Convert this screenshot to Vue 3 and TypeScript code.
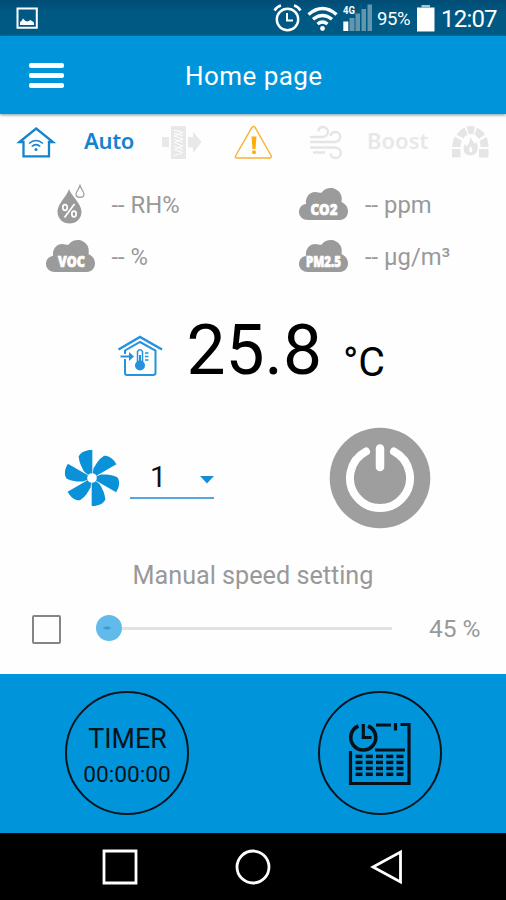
<script setup lang="ts">
import { ref } from 'vue'

const temperature = ref('25.8')
const fanSpeed = ref(1)
const manualSpeed = ref(45)
const timer = ref('00:00:00')
const blades = [0, 60, 120, 180, 240, 300]
const calendarRows = [756.4, 762.4, 768.4, 774.3]
const calendarColumns = [355.5, 365.8, 376, 386.3, 396.5]
const cloud = 'M9 32C4 32 0 28.500 0 24C0 19.500 3 16.500 7 16C6 8 12 2 19.500 4.500C22 5 22.500 5 24 3C27 0 33-1 37 1.500C42 4 43.500 9 42.500 14C46.500 16 49 19 49 23.500C49 28 45.500 32 41 32Z'
</script>

<template>
  <div class="screen">
    <header class="status">
      <svg class="picture" viewBox="15 6 24 24" width="24" height="24">
        <path d="M17.500 8.500H36.800V27.800H17.500Z" fill="none" stroke="#fff" stroke-width="2" />
        <path d="M20 25V22L21.500 21L23 18.500L25.500 21L27.500 21.500L30.500 20L34 22.500V25Z" fill="#fff" />
      </svg>
      <svg class="alarm" viewBox="273 2 30 32" width="30" height="32" fill="none" stroke="#fff">
        <circle cx="287.500" cy="19.500" r="10.700" stroke-width="2.400" />
        <path d="M287 13V20.500H293" stroke-width="2" />
        <path d="M274.500 10.500Q277 6.500 281 5.500M294 5.500Q298 6.500 300.500 10.500" stroke-width="2.600" />
      </svg>
      <svg class="wifi" viewBox="307 4 32 30" width="32" height="30" fill="none" stroke="#fff" stroke-width="3.400">
        <path d="M308.500 14.500Q322.500 2.500 336.500 14.500M313 19.300Q322.500 11.500 332 19.300M317.500 24Q322.500 20 327.500 24" />
        <circle cx="322.500" cy="28.500" r="2.400" fill="#fff" stroke="none" />
      </svg>
      <svg class="signal" viewBox="342 4 31 28" width="31" height="28">
        <path d="M349.500 18H354.500V31H349.500ZM355.500 13.500H360V31H355.500ZM361.500 9H366V31H361.500ZM367.500 4.500H372V31H367.500Z" fill="#6296ad" />
        <path d="M343.300 21.500H348.300V31H343.300Z" fill="#fff" />
        <text x="343" y="13.500" textLength="12" lengthAdjust="spacingAndGlyphs">4G</text>
      </svg>
      <span class="percent">95%</span>
      <svg class="battery" viewBox="417 4 18 28" width="18" height="28">
        <path d="M417 7.500H434.500V31.500H417Z" fill="#fff" />
        <path d="M421.500 5H430V7.500H421.500Z" fill="#a9c5d2" />
      </svg>
      <span class="clock">12:07</span>
    </header>

    <nav class="appbar">
      <button class="menu" aria-label="Menu"><i /><i /><i /></button>
      <h1>Home page</h1>
    </nav>

    <main>
      <section class="modes">
        <svg viewBox="18 126 36 33" width="36" height="33" fill="none" stroke="#1584ce">
          <path d="M19.500 142L36.200 128.500L53 142H49V156.300H23.500V142Z" stroke-width="2.300" />
          <path d="M29 143.500Q36 137.500 43 143.500M31.700 146.500Q36 142.800 40.300 146.500" stroke-width="1.500" />
          <circle cx="36" cy="149.500" r="1.500" fill="#1584ce" stroke="none" />
        </svg>
        <span class="auto">Auto</span>
        <svg viewBox="161 124 41 36" width="41" height="36" fill="#e8e8e8">
          <path d="M162 137H169V147H162ZM171 126H186V159H171ZM188 137H193V131.500L201.500 142L193 153V147.500H188Z" />
          <path d="M174 130L183 132.500L174 136L183 139L174 142.500L183 146L174 149.500L183 152.500L174 156M174 133L183 136M174 139L183 142.500M174 146L183 149.500" fill="none" stroke="#fff" stroke-width="1" />
        </svg>
        <svg viewBox="234 124 39 36" width="39" height="36">
          <path d="M253.500 126.500Q254.500 126.500 255.200 127.700L271 155.500Q272 158 269.500 158H237Q234.500 158 235.800 155.500L251.800 127.700Q252.500 126.500 253.500 126.500Z" fill="none" stroke="#fbb034" stroke-width="1.400" />
          <path d="M251.500 136.500H256.500L255.500 149H252.500Z" fill="#ffad0d" />
          <circle cx="254" cy="152.300" r="2" fill="#ffad0d" />
        </svg>
        <svg viewBox="309 124 34 36" width="34" height="36" fill="none" stroke="#e5e5e5" stroke-width="2.300">
          <path d="M310 137H322.500C330 136.500 329.500 127 323 127C320 127 318.500 129 318.500 131.500M310 142H334.500C342.500 141 341.500 132 335.500 132C332.500 132 331 133.500 330.500 136M310 147.500H335C342.500 148 342.500 158 335.500 158C332.500 158 331 156 330.500 153.500M313 152.500H325" />
        </svg>
        <span class="boost">Boost</span>
        <svg viewBox="451 125 40 35" width="40" height="35" fill="#e5e5e5">
          <path d="M452 150H460.500V158.500H452ZM479 150H488.500V158.500H479ZM452 148Q452.500 142 455 137.500L462 142Q460.500 145 460.500 148ZM456.500 135.500Q460 130.500 464.500 128.500L467.500 135.500Q465 137 463.500 139.500ZM466.500 127.500Q470.500 126.500 475 127.500L473.500 135Q470.500 134.300 468.500 135ZM477 128.500Q482 131 485 135.500L478.500 140Q477 137 474.500 135.500ZM486.500 138Q488.500 142 488.500 148H480.500Q480.500 145 479.500 142Z" />
          <path d="M470.500 138Q471.500 141 475 145Q477 143 476 141.500Q481 155 471 156.500Q461 156 464.500 145Q465.500 147 467.500 147Q470 143 470.500 138Z" />
          <path d="M470.500 147Q474 151 471 153.500Q467.500 152.500 470.500 147Z" fill="#fff" />
        </svg>
      </section>

      <section class="sensors">
        <div class="sensor">
          <svg class="drops" viewBox="45 182 49 42" width="49" height="42">
            <path d="M68 188C66 195 56.500 203 56.500 210.500C56.500 218 62 222.500 68.500 222.500C75 222.500 80.500 218 80.500 210.500C80.500 203 70.500 195 68 188Z" fill="#9b9b9b" />
            <path d="M79 184.500C78 188 75 191 75 193Q75 196.300 79 196.300Q83 196.300 83 193C83 191 80 188 79 184.500Z" fill="none" stroke="#9b9b9b" stroke-width="1.200" />
            <g fill="none" stroke="#fff" stroke-width="1.700">
              <ellipse cx="64" cy="206.500" rx="2.200" ry="2.800" /><ellipse cx="73" cy="213" rx="2.200" ry="2.800" /><path d="M73.500 203L63.500 216.500" />
            </g>
          </svg>
          <span>-- RH%</span>
        </div>
        <div class="sensor">
          <svg viewBox="0 0 49 33" width="49" height="33"><path :d="cloud" fill="#9b9b9b" /><text x="11.500" y="27" textLength="27" lengthAdjust="spacingAndGlyphs">CO2</text></svg>
          <span>-- ppm</span>
        </div>
        <div class="sensor">
          <svg viewBox="0 0 49 33" width="49" height="33"><path :d="cloud" fill="#9b9b9b" /><text x="12" y="27" textLength="27" lengthAdjust="spacingAndGlyphs">VOC</text></svg>
          <span>-- %</span>
        </div>
        <div class="sensor">
          <svg viewBox="0 0 49 33" width="49" height="33"><path :d="cloud" fill="#9b9b9b" /><text x="7" y="27" textLength="35" lengthAdjust="spacingAndGlyphs">PM2.5</text></svg>
          <span class="micro">-- µg/m³</span>
        </div>
      </section>

      <section class="temperature">
        <svg viewBox="117 335 46 42" width="46" height="42" fill="none" stroke="#2492dc">
          <path d="M118.500 349.500L140 337L162 349.500" stroke-width="2.400" />
          <path d="M125 354V350.500L140 342L155.500 350.500V373Q155.500 375 153 375H127Q125 375 125 373V359" stroke-width="2" />
          <path d="M120.500 356.500H130" stroke-width="2" />
          <path d="M129 352L134 356.500L129 361Z" fill="#2492dc" stroke="none" />
          <path d="M137.500 362V351.500Q140 348 142.500 351.500V362" stroke-width="1.500" />
          <path d="M140 355V365" stroke-width="2" /><circle cx="140" cy="365.500" r="5" fill="#2492dc" stroke="none" />
          <path d="M145 353H148.500M145 356.500H148.500M145 360H148.500" stroke-width="1.300" />
        </svg>
        <strong>{{ temperature }}</strong>
        <span>°C</span>
      </section>

      <section class="controls">
        <svg class="fan" viewBox="-28 -30 56 60" width="56" height="60">
          <path v-for="angle in blades" :key="angle" :transform="`rotate(${angle})`" d="M.3-28C-6-28.200-11.500-26-13.300-21.500C-12.700-15-10.500-11-7.500-6L0 0H.3Z" fill="#0a91d8" />
          <circle r="4.800" fill="#fff" />
        </svg>
        <div class="select">
          <span>{{ fanSpeed }}</span>
          <svg viewBox="0 0 14 8" width="14" height="8"><path d="M0 0H14L7 7.500Z" fill="#168ed5" /></svg>
        </div>
        <button class="power" aria-label="Power">
          <svg viewBox="-51 -51 102 102" width="102" height="102" fill="none" stroke="#fff" stroke-linecap="round">
            <circle r="50.300" fill="#9e9e9e" stroke="none" />
            <path d="M0-29.500V-11" stroke-width="8.500" />
            <path d="M-14-26.500A30 30 0 1 0 14-26.500" stroke-width="8" />
          </svg>
        </button>
      </section>

      <h2>Manual speed setting</h2>
      <section class="manual">
        <i class="check" />
        <div class="slider"><i class="knob" /><i class="track" /></div>
        <span>{{ manualSpeed }} %</span>
      </section>
    </main>

    <footer class="actions">
      <button class="round timer"><b>TIMER</b><span>{{ timer }}</span></button>
      <button class="round schedule" aria-label="Schedule">
        <svg viewBox="347 721 66 66" width="66" height="66" fill="none" stroke="#061018" stroke-width="3.200">
          <path d="M350.500 751V783.500H409V724.500H400.500M376 725H391M375 750H405" />
          <path d="M395.500 723V730.500" stroke-width="3.200" />
          <path d="M358.500 726A12.500 12.500 0 1 0 368 726" stroke-width="3.600" />
          <path d="M363.300 724V737.500H371.500" />
          <template v-for="y in calendarRows" :key="y">
            <path v-for="x in calendarColumns" :key="x" :d="`M${x} ${y}h7`" stroke-width="3.500" />
          </template>
        </svg>
      </button>
    </footer>
    <footer class="navigation">
      <svg viewBox="0 0 38 38" width="38" height="38"><path d="M3 3H35V35H3Z" /></svg>
      <svg viewBox="0 0 38 38" width="38" height="38"><circle cx="19" cy="19" r="16" /></svg>
      <svg viewBox="0 0 38 38" width="38" height="38"><path d="M33.500 4V34L6 19Z" /></svg>
    </footer>
  </div>
</template>

<style>
body { margin: 0; background: #fff; }
</style>
<style scoped>
* { box-sizing: border-box; }
.screen { width: 506px; height: 900px; display: flex; flex-direction: column; font-family: Roboto, "Noto Sans", sans-serif; overflow: hidden; background: #fff; }
svg { display: block; flex: none; overflow: visible; }
span, strong, b, h1, h2 { white-space: nowrap; font-weight: 400; margin: 0; }
button { padding: 0; border: 0; background: none; font-family: inherit; color: inherit; }
.status { height: 36px; flex: none; display: flex; align-items: flex-start; background: linear-gradient(#004c75, #005984 35%, #005983); color: #fff; }
.picture { margin: 6px 0 0 15px; }
.alarm { margin: 2px 0 0 234px; }
.wifi { margin: 4px 0 0 4px; }
.signal { margin: 4px 0 0 3px; }
.signal text { font: 700 10px Roboto, sans-serif; fill: #fff; }
.percent { width: 33px; margin: 8px 0 0 4px; font-size: 18.500px; line-height: 23px; letter-spacing: -.4px; }
.battery { margin: 4px 0 0 7px; }
.clock { margin: 5px 0 0 6px; font-size: 24px; line-height: 28px; letter-spacing: -.8px; }
.appbar { height: 78px; flex: none; background: #0095db; color: #fff; display: flex; align-items: flex-start; box-shadow: 0 1px 3px #7896a5; position: relative; }
.menu { width: 35px; margin: 27px 0 0 29px; display: flex; flex-direction: column; gap: 5.500px; }
.menu i { height: 4.500px; border-radius: 2px; background: #fff; }
h1 { margin: 25px 0 0 121px; font-size: 26px; line-height: 30px; letter-spacing: .450px; }
main { height: 560px; flex: none; color: #999; background: #fefefe; }
.modes { height: 56px; padding: 10px 0 0 18px; display: flex; align-items: flex-start; }
.modes svg:nth-child(1) { margin-top: 2px; }
.auto, .boost { font: 600 22px/30px "Noto Sans", sans-serif; letter-spacing: -.3px; color: #1584ce; width: 49px; margin: 1px 28px 0 30px; }
.modes svg:nth-child(4) { margin-left: 32px; }
.modes svg:nth-child(5) { margin-left: 36px; }
.boost { color: #e8e8e8; width: 61px; letter-spacing: 0; margin: 1px 23px 0 24px; }
.sensors { height: 120px; padding: 8px 0 0 45.500px; display: grid; grid-template-columns: 253.500px 1fr; grid-template-rows: 52px 52px; }
.sensor { height: 52px; display: flex; align-items: center; }
.sensor span { margin: 2px 0 0 17px; font-size: 23.800px; line-height: 30px; }
.sensor text { font: 800 15.500px "Open Sans", sans-serif; fill: #fff; stroke: #fff; stroke-width: .7px; }
.temperature { height: 120px; display: flex; align-items: flex-start; color: #000; padding-left: 117px; }
.temperature svg { margin-top: 45px; }
.temperature strong { margin: 21px 0 0 23.500px; width: 133px; font-size: 69.500px; line-height: 80px; }
.temperature span { margin: 48px 0 0 23.500px; font-size: 41px; line-height: 48px; font-weight: 400; }
.controls { height: 140px; display: flex; align-items: flex-start; padding-left: 64px; }
.fan { margin-top: 38px; }
.select { width: 84px; height: 39px; margin: 50px 0 0 10px; border-bottom: 2px solid #53a9df; display: flex; align-items: flex-start; color: #111; }
.select span { width: 70px; padding-left: 20px; font-size: 29px; line-height: 34px; }
.select svg { margin-top: 16px; }
.power { width: 102px; height: 102px; margin: 17px 0 0 114.500px; }
h2 { height: 40px; text-align: center; font-size: 25.200px; line-height: 30px; padding-top: 1px; margin-top: 10px; }
.manual { height: 60px; display: flex; align-items: flex-start; padding-left: 32px; }
.check { width: 29px; height: 29px; margin-top: 15px; border: 2px solid #858585; border-radius: 2px; }
.slider { width: 296px; height: 26px; margin: 15px 0 0 35px; display: flex; align-items: center; }
.knob { width: 26px; height: 26px; border-radius: 50%; background: radial-gradient(ellipse 5px 2px at 11px 13px, #3498cc 30%, #61bae9 100%); flex: none; }
.track { height: 3px; flex: 1; background: #e2e2e2; }
.manual span { margin: 14px 0 0 37px; font-size: 24.500px; line-height: 30px; }
.actions { height: 159px; flex: none; display: flex; gap: 129px; padding: 17px 0 0 65px; background: #0095db; color: #06131b; }
.round { width: 124px; height: 124px; border: 2px solid #06131b; border-radius: 50%; display: flex; flex-direction: column; align-items: center; }
.timer b { font-size: 26.800px; line-height: 32px; margin-top: 30px; padding-left: 1px; }
.timer span { font-size: 22.700px; line-height: 30px; margin-top: 4.500px; }
.schedule { padding-top: 28px; }
.navigation { height: 67px; flex: none; background: #000; display: flex; gap: 95px; padding: 15px 0 0 101px; }
.navigation svg { fill: none; stroke: #fff; stroke-width: 2.800; }
</style>
